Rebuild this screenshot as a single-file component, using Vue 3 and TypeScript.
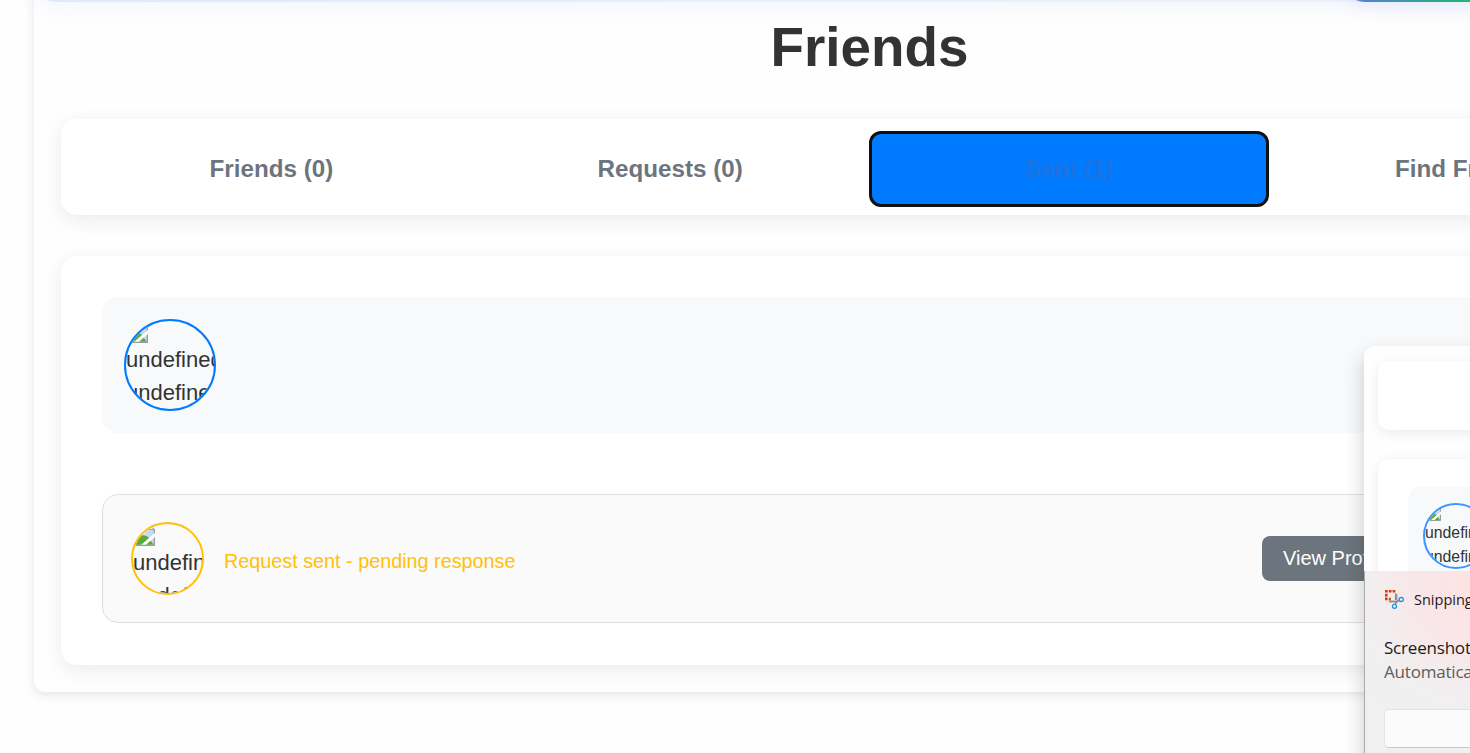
<script setup lang="ts">
interface Tab {
  label: string
  active?: boolean
}

const tabs: Tab[] = [
  { label: 'Friends (0)' },
  { label: 'Requests (0)' },
  { label: 'Sent (1)', active: true },
  { label: 'Find Friends' },
]
</script>

<template>
  <div class="page">
    <svg class="defs" width="0" height="0" aria-hidden="true">
      <symbol id="broken" viewBox="0 0 16 16">
        <path d="M.5 .5h11.5l3.5 3.5v11.5H.5z" fill="#c6d8f7" />
        <path d="M2 7q0-2.500 3-2.500q3-2 4 2.500z" fill="#f2f6ff" />
        <path d="M1 15V13q5-7.500 10-3.500l4 5.500z" fill="#58ab3b" />
        <path d="M.5 15.5V.5h11.5M15.500 4v11.500H.5" fill="none" stroke="#9c9c9c" />
        <path d="M12 .5v3.500h3.500z" fill="#fff" stroke="#a3a3a3" stroke-width=".8" />
        <path d="M16.200 6.200v3L9.500 15H6z" fill="#fafafa" />
      </symbol>
    </svg>

    <main class="shell">
      <header class="topbar"><div class="topbar-action"></div></header>
      <h1>Friends</h1>
      <nav class="tabs">
        <button v-for="tab in tabs" :key="tab.label" class="tab" :class="{ active: tab.active }">
          {{ tab.label }}
        </button>
      </nav>
      <section class="panel">
        <div class="profile">
          <div class="avatar">
            <svg class="broken"><use href="#broken" /></svg>
            <span>undefined undefined</span>
          </div>
        </div>
        <div class="request">
          <div class="avatar pending">
            <svg class="broken"><use href="#broken" /></svg>
            <span>undefined undefined</span>
          </div>
          <p class="status">Request sent - pending response</p>
          <button class="view">View Profile</button>
        </div>
      </section>
    </main>

    <aside class="toast">
      <div class="preview">
        <div class="preview-tabs"></div>
        <div class="preview-panel">
          <div class="preview-profile">
            <div class="avatar small">
              <svg class="broken"><use href="#broken" /></svg>
              <span>undefined undefined</span>
            </div>
          </div>
        </div>
      </div>
      <div class="notice">
        <div class="app">
          <svg class="snip" viewBox="0 0 20 20" width="20" height="20">
            <path d="M5 12.500h9M12 4.500v8.500" stroke="#8b9095" stroke-width="2.200" fill="none" />
            <path d="M9 11.700l5-.2-.8-6" stroke="#c3c7ca" stroke-width="1.300" fill="none" />
            <path d="M1 2.300h10.300" stroke="#d83b0a" stroke-width="2.600" stroke-dasharray="2.700 1.100" fill="none" />
            <path d="M2.300 4.800v6.500" stroke="#d83b0a" stroke-width="2.600" stroke-dasharray="2.700 1.100" fill="none" />
            <path d="M4.800 10h2" stroke="#d83b0a" stroke-width="2.600" fill="none" />
            <circle cx="17.300" cy="10.500" r="2" fill="#fff" stroke="#1797d5" stroke-width="1.300" />
            <circle cx="10.500" cy="17.300" r="2" fill="#fff" stroke="#1797d5" stroke-width="1.300" />
            <path d="M12.500 12.500l-1.300 3M12.500 12.500l3-1.200" stroke="#777c80" stroke-width="1.300" />
          </svg>
          <span>Snipping Tool</span>
        </div>
        <p class="title">Screenshot copied to clipboard</p>
        <p class="detail">Automatically saved to screenshots folder.</p>
        <div class="markup"></div>
      </div>
    </aside>
  </div>
</template>

<style>
body {
  background: #fefefe;
}
</style>

<style scoped>
* {
  box-sizing: border-box;
}
.page {
  position: relative;
  width: 1470px;
  height: 753px;
  overflow: hidden;
  background: #fefefe;
  font-family: 'Liberation Sans', Arial, sans-serif;
  color: #333;
}
.defs {
  position: absolute;
}
.shell {
  width: 1671px;
  height: 792px;
  margin: -100px 0 0 34px;
  border-radius: 11px;
  background: #fefefe;
  box-shadow: 0 3px 10px rgba(0, 0, 0, 0.1);
}
.topbar {
  display: flex;
  height: 102px;
  border-radius: 22px;
  background: linear-gradient(90deg, #e0e7ff, #e8f1fb 50%, #eef2fc);
  box-shadow: 0 3px 24px rgba(80, 110, 240, 0.07);
}
.topbar-action {
  width: 300px;
  margin-left: 1309px;
  border-radius: 22px;
  background: linear-gradient(90deg, #5b7be0, #22b573 40%);
  box-shadow: 0 4px 18px rgba(80, 90, 230, 0.1);
}
h1 {
  margin: 14px 0 0;
  height: 62px;
  font-size: 54.8px;
  line-height: 62px;
  text-align: center;
}
.tabs {
  display: flex;
  height: 96px;
  margin: 41px 27px 0;
  padding: 13px 11px 9px;
  border-radius: 16px;
  background: #fff;
  box-shadow: 0 5px 20px rgba(0, 0, 0, 0.08);
}
.tab {
  flex: 1;
  height: 74px;
  padding: 0 0 1px;
  border: 0;
  border-radius: 11px;
  background: none;
  color: #6c757d;
  font: bold 24.2px/73px 'Liberation Sans', Arial, sans-serif;
}
.tab.active {
  background: #007bff;
  color: #1c73e0;
  outline: 3px solid #101010;
  outline-offset: -2px;
}
.panel {
  height: 409px;
  margin: 41px 27px 0;
  padding: 41px;
  border-radius: 16px;
  background: #fff;
  box-shadow: 0 5px 20px rgba(0, 0, 0, 0.08);
}
.profile {
  height: 136px;
  padding: 22px;
  border-radius: 16px;
  background: #f8f9fb;
}
.avatar {
  width: 92px;
  height: 92px;
  flex: none;
  border: 2px solid #007bff;
  border-radius: 50%;
  overflow: hidden;
  font-size: 22px;
  line-height: 33px;
}
.avatar span {
  display: block;
}
.broken {
  display: block;
  width: 22px;
  height: 22px;
}
.request {
  display: flex;
  align-items: center;
  height: 129px;
  margin-top: 61px;
  padding: 0 28px;
  border: 1px solid #dedede;
  border-radius: 16px;
  background: #fafafa;
}
.pending {
  width: 73px;
  height: 73px;
  border-color: #ffc107;
}
.status {
  margin: 5px 0 0 20px;
  font-size: 19.8px;
  color: #ffc107;
}
.view {
  width: 160px;
  height: 45px;
  margin-left: auto;
  margin-right: 186px;
  padding: 0 0 0 21px;
  border: 0;
  border-radius: 8px;
  background: #6c757d;
  color: #fff;
  font: 20px 'Liberation Sans', Arial, sans-serif;
  text-align: left;
}
.toast {
  position: absolute;
  left: 1364px;
  top: 346px;
  width: 500px;
  height: 460px;
  border-radius: 11px;
  background: #fefefe;
  box-shadow: 0 10px 20px rgba(0, 0, 0, 0.2);
}
.preview {
  height: 225px;
  padding: 15px 0 0 14px;
  overflow: hidden;
}
.preview-tabs {
  height: 69px;
  border-radius: 12px;
  background: #fff;
  box-shadow: 0 3px 13px rgba(0, 0, 0, 0.08);
}
.preview-panel {
  height: 200px;
  margin-top: 29px;
  padding: 28px 0 0 30px;
  border-radius: 12px;
  background: #fff;
  box-shadow: 0 3px 13px rgba(0, 0, 0, 0.08);
}
.preview-profile {
  height: 110px;
  padding: 16px 15px;
  border-radius: 12px;
  background: #f8f9fb;
}
.avatar.small {
  width: 66px;
  height: 66px;
  border: 2px solid #3a97ff;
  font-size: 15.8px;
  line-height: 23.5px;
}
.small .broken {
  width: 16px;
  height: 16px;
}
.notice {
  height: 240px;
  margin-left: 1px;
  padding: 17px 0 0 19px;
  background: radial-gradient(circle at 110px 15px, #ffe2e3, #f9e6e8 55px, #f1eff0 115px, #f0f0f0 160px);
  box-shadow: -1px 0 0 #aaa;
  font-family: 'Open Sans', 'Noto Sans', sans-serif;
  color: #1a1a1a;
  white-space: nowrap;
}
.app {
  display: flex;
  align-items: center;
  gap: 10px;
  height: 22px;
  font-size: 14.5px;
}
.title,
.detail {
  margin: 0;
  height: 24px;
  font-size: 17px;
  line-height: 24px;
  letter-spacing: -0.2px;
}
.title {
  margin-top: 26px;
}
.detail {
  color: #5c5c5c;
}
.markup {
  height: 39px;
  margin-top: 25px;
  border: 1px solid #e3e3e3;
  border-bottom-color: #c9c9c9;
  border-radius: 5px;
  background: #fbfbfb;
}
</style>
